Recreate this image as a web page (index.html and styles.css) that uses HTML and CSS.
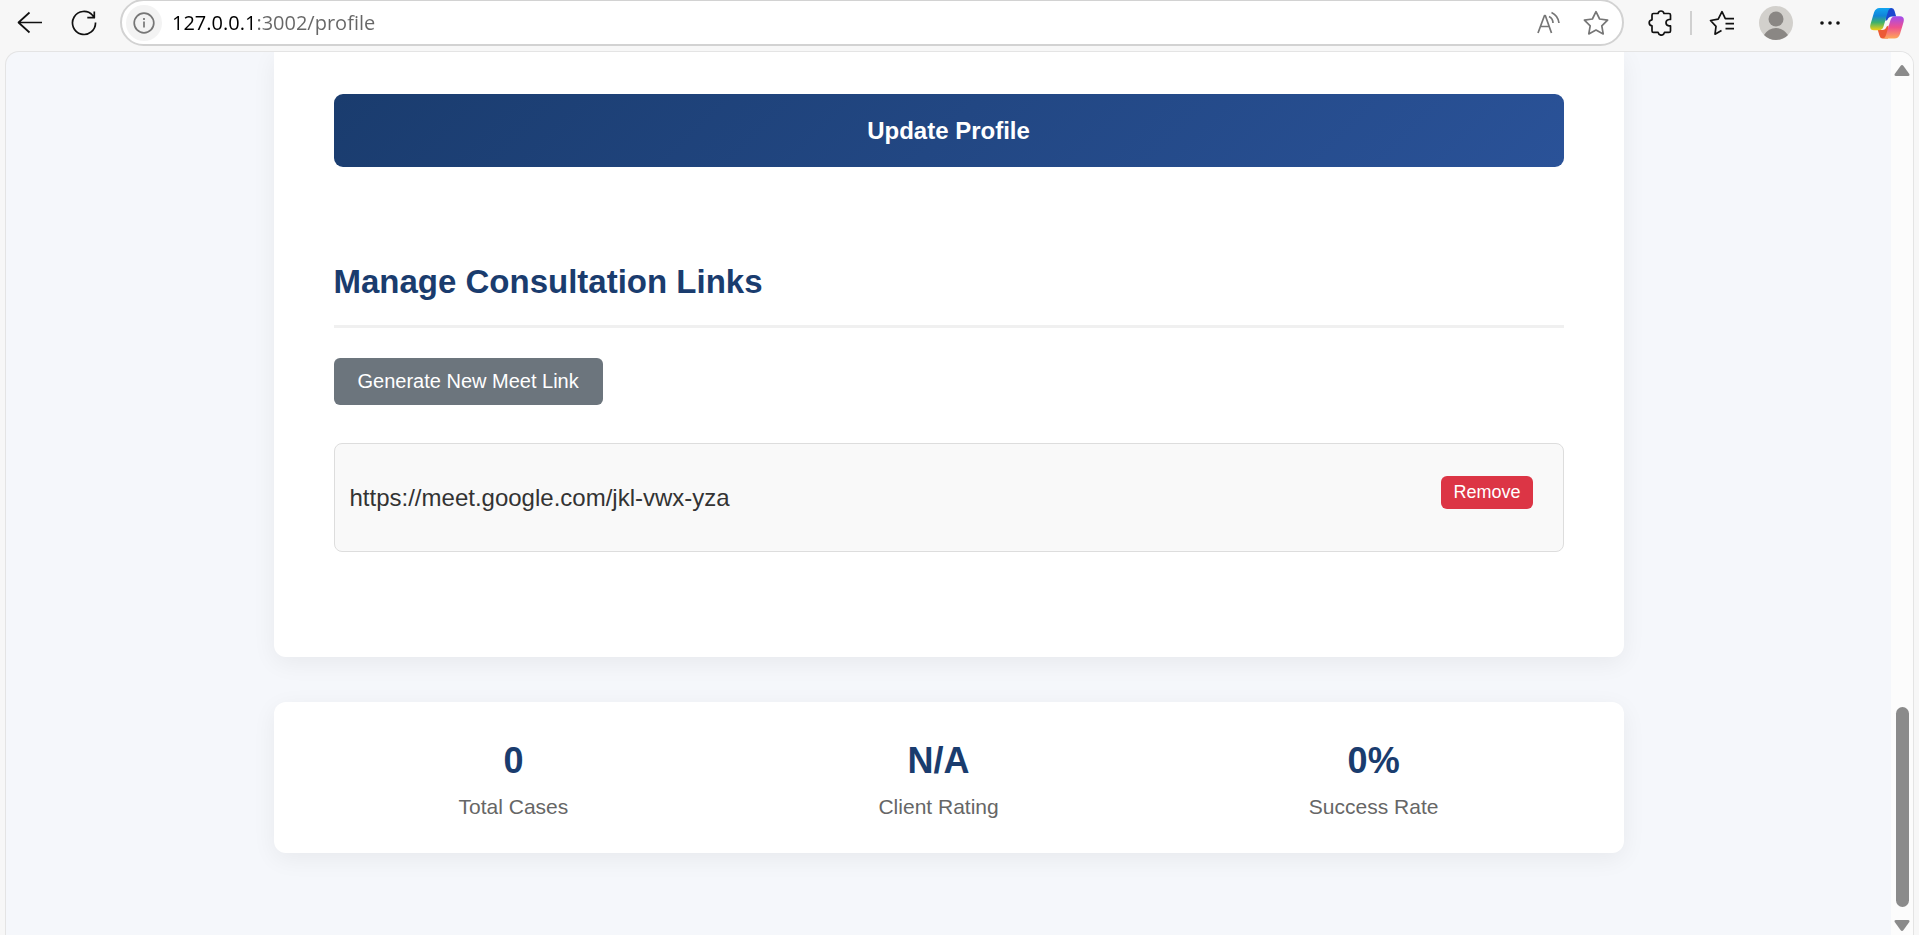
FILE: index.html
```html
<!DOCTYPE html>
<html lang="en">
<head>
    <meta charset="UTF-8">
    <meta name="viewport" content="width=device-width, initial-scale=1.0">
    <title>Profile</title>
    <link rel="stylesheet" href="styles.css">
</head>
<body>
    <header class="toolbar">
        <button class="tool" aria-label="Back">
            <svg width="26" height="24" viewBox="0 0 26 24"><path d="M25 11.500H1.500M12.500 1.500L1.500 11.500l11 10"/></svg>
        </button>
        <button class="tool" aria-label="Refresh">
            <svg width="26" height="26" viewBox="0 0 26 26"><path d="M24.500 12.500A11.500 11.500 0 1 1 21.500 5.200L23.300 7.500M23.300 1.500v6.200h-7"/></svg>
        </button>
        <div class="address">
            <button class="tool info" aria-label="Site information">
                <svg width="22" height="22" viewBox="0 0 22 22"><circle cx="11" cy="11" r="9.800"/><path d="M11 9.500v6M11 6v2"/></svg>
            </button>
            <input class="url" type="text" value="127.0.0.1:3002/profile" aria-label="Address">
            <button class="tool" aria-label="Read aloud">
                <svg width="26" height="24" viewBox="0 0 26 24"><path d="M3 22L9.500 4.500h.8L16.500 22M5.500 15.500h8.700M14 5.500q4 2 4 6.500M16.500 1.500q6.500 3 7.500 10.500"/></svg>
            </button>
            <button class="tool" aria-label="Add to favorites">
                <svg width="26" height="26" viewBox="0 0 26 26"><path d="M13 1.700l3.600 7.300 8 1.200-5.800 5.700 1.400 8L13 20.100l-7.200 3.800 1.400-8L1.400 10.200l8-1.200z"/></svg>
            </button>
        </div>
        <button class="tool" aria-label="Extensions">
            <svg width="26" height="26" viewBox="0 0 26 26"><path d="M6.500 3.500h4.500q.6-2.500 3-2.500t3 2.500H22q1.500 0 1.500 1.500v4.500h-1.500q-3 .4-3 3.200t3 3.200h1.500v5q0 1.500-1.500 1.500h-4.500q-.6 2.800-3.200 2.800t-3.200-2.800H6.500q-1.500 0-1.500-1.500v-5q-2.800-.6-2.800-3.200T5 9.800V5q0-1.500 1.500-1.500z"/></svg>
        </button>
        <span class="divider"></span>
        <button class="tool" aria-label="Favorites">
            <svg width="26" height="26" viewBox="0 0 26 26"><path d="M12.500 20.500l-6.500 3.700 1-7.900L1.500 10.500l7.700-1.300 3.800-7.500 3.300 7H25M16.500 13.700H25M16.500 18.700H25"/></svg>
        </button>
        <button class="tool" aria-label="Account">
            <svg class="avatar" width="34" height="34" viewBox="0 0 34 34">
                <circle cx="17" cy="17" r="17" fill="#d2d0cc"/>
                <circle cx="17" cy="13" r="7.500" fill="#8a8784"/>
                <path d="M5 29q4.500-7 12-7t12 7q-5 5-12 5T5 29z" fill="#8a8784"/>
            </svg>
        </button>
        <button class="tool" aria-label="Settings and more">
            <svg class="dots" width="22" height="6" viewBox="0 0 22 6"><circle cx="3" cy="3" r="1.800"/><circle cx="11" cy="3" r="1.800"/><circle cx="19" cy="3" r="1.800"/></svg>
        </button>
        <button class="tool copilot" aria-label="Copilot">
            <svg width="34" height="31" viewBox="0 0 34 31">
                <defs>
                    <linearGradient id="cool" x1="0" y1="0" x2="0" y2="1">
                        <stop offset="0" stop-color="#12a5f0"/>
                        <stop offset=".35" stop-color="#1184d8"/>
                        <stop offset=".65" stop-color="#3fb16a"/>
                        <stop offset="1" stop-color="#f4cf12"/>
                    </linearGradient>
                    <linearGradient id="warm" x1="0" y1="0" x2="0" y2="1">
                        <stop offset="0" stop-color="#a04cf0"/>
                        <stop offset=".5" stop-color="#ee5090"/>
                        <stop offset="1" stop-color="#ffa757"/>
                    </linearGradient>
                </defs>
                <path d="M16 0h5.500q2.300 0 3 2.700L26.200 8.500H22q-3.500 0-4.700 3.500l-1.800 1z" fill="#1b48cf"/>
                <path d="M18 30.500h-5.500q-2.300 0-3-2.700L7.800 22H12q3.500 0 4.700-3.500l1.800-1z" fill="#ec5a35"/>
                <path d="M9.500 0H22q-3 0-4 3.500l-4.500 15q-1.200 3.800-4.500 3.800H4q-5 0-3.500-6L4 4.500Q5.500 0 9.500 0z" fill="url(#cool)"/>
                <path d="M24.500 30.500H12q3 0 4-3.500l4.500-15q1.200-3.800 4.500-3.800h5q5 0 3.500 6L30 26q-1.500 4.500-5.500 4.500z" fill="url(#warm)"/>
            </svg>
        </button>
    </header>
    <div class="window">
        <main class="page">
            <section class="card">
                <button class="update">Update Profile</button>
                <h2>Manage Consultation Links</h2>
                <button class="generate">Generate New Meet Link</button>
                <div class="link-item">
                    <p>https://meet.google.com/jkl-vwx-yza</p>
                    <button class="remove">Remove</button>
                </div>
            </section>
            <section class="stats">
                <div class="stat"><strong>0</strong><span>Total Cases</span></div>
                <div class="stat"><strong>N/A</strong><span>Client Rating</span></div>
                <div class="stat"><strong>0%</strong><span>Success Rate</span></div>
            </section>
        </main>
        <div class="scrollbar">
            <svg width="16" height="11" viewBox="0 0 16 11"><path d="M6.500 1q1.500-1.800 3 0l5.800 8q.7 2-1.300 2H2q-2 0-1.300-2z"/></svg>
            <div class="thumb"></div>
            <svg width="16" height="11" viewBox="0 0 16 11"><path d="M6.500 10q1.500 1.800 3 0l5.800-8q.7-2-1.300-2H2Q0 0 .7 2z"/></svg>
        </div>
    </div>
</body>
</html>
```
FILE: styles.css
```css
* {
    box-sizing: border-box;
}
body {
    margin: 0;
    height: 100vh;
    display: flex;
    flex-direction: column;
    overflow: hidden;
    background: #f7f7f7;
    font-family: "Liberation Sans", Arial, sans-serif;
}
button {
    border: none;
    font-family: inherit;
    cursor: pointer;
}

/* Browser toolbar */
.toolbar {
    display: flex;
    align-items: center;
    gap: 18px;
    padding: 0 14px 6px 12px;
}
.tool {
    display: flex;
    align-items: center;
    justify-content: center;
    flex-shrink: 0;
    width: 36px;
    height: 36px;
    padding: 0;
    background: none;
}
.tool svg {
    fill: none;
    stroke: #111;
    stroke-width: 1.7;
    stroke-linejoin: round;
}
.address {
    flex: 1;
    display: flex;
    align-items: center;
    gap: 12px;
    height: 47px;
    margin-top: -1px;
    padding: 0 8px 0 4px;
    border: 2px solid #d2d2d2;
    border-radius: 24px;
    background: #fff;
}
.address svg {
    stroke: #767676;
}
.address .info {
    border-radius: 50%;
    background: #f3f3f3;
}
/* host is black, the rest of the address is grey */
.url {
    flex: 1;
    min-width: 0;
    margin-left: -2px;
    padding: 0;
    border: none;
    outline: none;
    background: linear-gradient(90deg, #000 84px, #666 84px);
    -webkit-background-clip: text;
    background-clip: text;
    color: transparent;
    font-family: "Open Sans", sans-serif;
    font-size: 20px;
}
.divider {
    width: 2px;
    height: 24px;
    margin: 0 -6px;
    background: #d0d0d0;
}
.tool .avatar, .copilot svg {
    stroke: none;
}
.tool .dots {
    fill: #111;
    stroke: none;
}
.copilot {
    margin-left: 3px;
}

/* Page area */
.window {
    flex: 1;
    display: flex;
    min-height: 0;
    margin: -1px 5px 0;
    border: 1px solid #e4e4e4;
    border-bottom: none;
    border-radius: 14px 14px 0 0;
    background: #f5f7fb;
    overflow: hidden;
}
.page {
    flex: 1;
    min-width: 0;
    overflow: hidden;
}
.card, .stats {
    width: 100%;
    max-width: 1350px;
    margin: 0 auto;
    background: #fff;
    box-shadow: 0 6px 24px rgba(0, 0, 0, 0.06);
}
.card {
    padding: 42px 60px 105px;
    border-radius: 0 0 12px 12px;
}
.update {
    width: 100%;
    padding: 23px;
    border-radius: 9px;
    background: linear-gradient(135deg, #1a3c6e, #2a5298);
    color: #fff;
    font-size: 24px;
    font-weight: bold;
    line-height: 27px;
}
h2 {
    margin: 96px 0 30px;
    padding-bottom: 24px;
    border-bottom: 3px solid #f0f0f0;
    color: #1a3c6e;
    font-size: 33px;
    line-height: 38px;
}
.generate {
    padding: 12px 24px;
    border-radius: 6px;
    background: #6c757d;
    color: #fff;
    font-size: 20px;
}
.link-item {
    display: flex;
    align-items: center;
    justify-content: space-between;
    margin-top: 38px;
    padding: 16px 30px 16px 15px;
    border: 1px solid #ddd;
    border-radius: 8px;
    background: #f9f9f9;
    color: #333;
    font-size: 24px;
    line-height: 27px;
}
.remove {
    margin-bottom: 10px;
    padding: 6px 12px;
    border-radius: 6px;
    background: #dc3545;
    color: #fff;
    font-size: 18px;
}
.stats {
    display: flex;
    justify-content: space-around;
    margin-top: 45px;
    padding: 38px 30px 34px;
    border-radius: 12px;
}
.stat {
    display: flex;
    flex-direction: column;
    align-items: center;
    gap: 14px;
}
.stat strong {
    color: #1a3c6e;
    font-size: 36px;
    line-height: 41px;
}
.stat span {
    color: #666;
    font-size: 21px;
    line-height: 24px;
}

/* Scrollbar */
.scrollbar {
    display: flex;
    flex-direction: column;
    align-items: center;
    width: 22px;
    padding: 13px 0 4px;
    background: #fcfcfc;
}
.scrollbar svg {
    fill: #8b8b8b;
}
.thumb {
    width: 13px;
    height: 200px;
    margin: auto 0 13px;
    border-radius: 7px;
    background: #8b8b8b;
}
```
